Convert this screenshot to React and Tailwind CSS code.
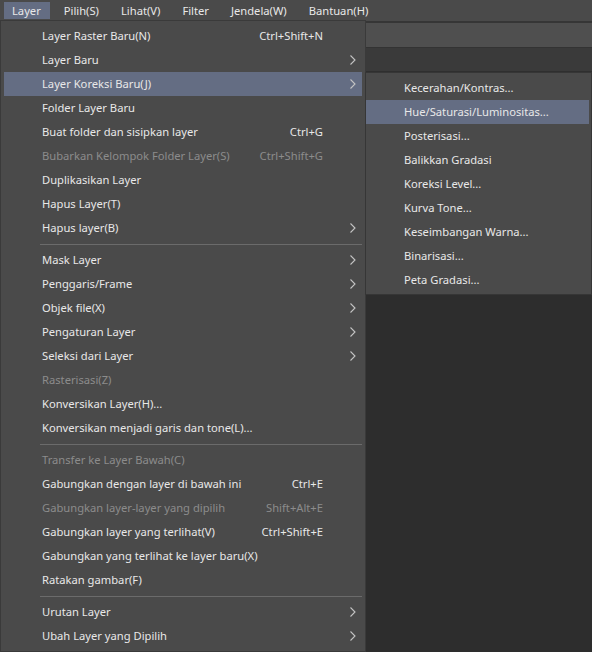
import React from "react";

const mainSections = [
    [
        { label: "Layer Raster Baru(N)", shortcut: "Ctrl+Shift+N" },
        { label: "Layer Baru", sub: true },
        { label: "Layer Koreksi Baru(J)", sub: true, active: true },
        { label: "Folder Layer Baru" },
        { label: "Buat folder dan sisipkan layer", shortcut: "Ctrl+G" },
        { label: "Bubarkan Kelompok Folder Layer(S)", shortcut: "Ctrl+Shift+G", disabled: true },
        { label: "Duplikasikan Layer" },
        { label: "Hapus Layer(T)" },
        { label: "Hapus layer(B)", sub: true },
    ],
    [
        { label: "Mask Layer", sub: true },
        { label: "Penggaris/Frame", sub: true },
        { label: "Objek file(X)", sub: true },
        { label: "Pengaturan Layer", sub: true },
        { label: "Seleksi dari Layer", sub: true },
        { label: "Rasterisasi(Z)", disabled: true },
        { label: "Konversikan Layer(H)..." },
        { label: "Konversikan menjadi garis dan tone(L)..." },
    ],
    [
        { label: "Transfer ke Layer Bawah(C)", disabled: true },
        { label: "Gabungkan dengan layer di bawah ini", shortcut: "Ctrl+E" },
        { label: "Gabungkan layer-layer yang dipilih", shortcut: "Shift+Alt+E", disabled: true },
        { label: "Gabungkan layer yang terlihat(V)", shortcut: "Ctrl+Shift+E" },
        { label: "Gabungkan yang terlihat ke layer baru(X)" },
        { label: "Ratakan gambar(F)" },
    ],
    [
        { label: "Urutan Layer", sub: true },
        { label: "Ubah Layer yang Dipilih", sub: true },
    ],
];

const subItems = [
    "Kecerahan/Kontras...",
    "Hue/Saturasi/Luminositas...",
    "Posterisasi...",
    "Balikkan Gradasi",
    "Koreksi Level...",
    "Kurva Tone...",
    "Keseimbangan Warna...",
    "Binarisasi...",
    "Peta Gradasi...",
];

const menuBar = ["Layer", "Pilih(S)", "Lihat(V)", "Filter", "Jendela(W)", "Bantuan(H)"];

const Chevron = () => (
    <svg width="6" height="10" viewBox="0 0 6 10" fill="none" stroke="#c4c4c4" strokeWidth="1.1">
        <path d="M0.5 0.5 L5 5 L0.5 9.5" />
    </svg>
);

const MenuRow = ({ item }) => (
    <div className={`flex items-center h-6 pl-[38px] ${item.active ? "bg-[#646d83]" : ""}`}>
        <span className={`flex-1 whitespace-nowrap ${item.disabled ? "text-[#8c8c8c]" : "text-[#e8e8e8]"}`}>{item.label}</span>
        {item.shortcut && (
            <span className={`whitespace-nowrap ${item.disabled ? "text-[#8c8c8c]" : "text-[#e8e8e8]"}`}>{item.shortcut}</span>
        )}
        <div className="w-[39px] flex justify-end pr-[6px]">{item.sub && <Chevron />}</div>
    </div>
);

export default function App() {
    return (
        <div
            className="relative w-[592px] h-[652px] overflow-hidden bg-[#2d2d2d] text-[11.2px] leading-none"
            style={{ fontFamily: '"Noto Sans", "Open Sans", sans-serif' }}
        >
            {/* menu bar */}
            <div className="h-[21px] bg-[#4a4a4a] flex items-center pl-[4px]">
                {menuBar.map((m, i) => (
                    <div
                        key={m}
                        className={`h-[17px] px-2 flex items-center text-[#e8e8e8] ${i === 0 ? "bg-[#646d83] pr-[9px]" : "ml-[6px]"}`}
                    >
                        {m}
                    </div>
                ))}
            </div>
            <div className="h-[2px] bg-[#363636]" />
            <div className="h-[25px] bg-[#4f4f4f] border-b border-[#333]" />
            <div className="h-[24px] bg-[#3a3a3a] border-b border-[#2f2f2f]" />

            {/* main dropdown */}
            <div className="absolute left-0 top-[20px] w-[366px] bg-[#4a4a4a] border border-[#3a3a3a] p-[3px]">
                {mainSections.map((sec, si) => (
                    <div key={si}>
                        {si > 0 && (
                            <div className="h-2 flex items-center pl-[36px]">
                                <div className="h-px flex-1 bg-[#6b6b6b]" />
                            </div>
                        )}
                        {sec.map((item) => (
                            <MenuRow key={item.label} item={item} />
                        ))}
                    </div>
                ))}
            </div>

            {/* submenu */}
            <div className="absolute left-[365px] top-[72px] w-[227px] bg-[#4a4a4a] border border-[#363636] pt-[3px] pb-[2px] pr-[2px]">
                {subItems.map((s, i) => (
                    <div key={s} className={`h-6 flex items-center pl-[38px] text-[#e8e8e8] ${i === 1 ? "bg-[#646d83]" : ""}`}>
                        {s}
                    </div>
                ))}
            </div>
        </div>
    );
}
